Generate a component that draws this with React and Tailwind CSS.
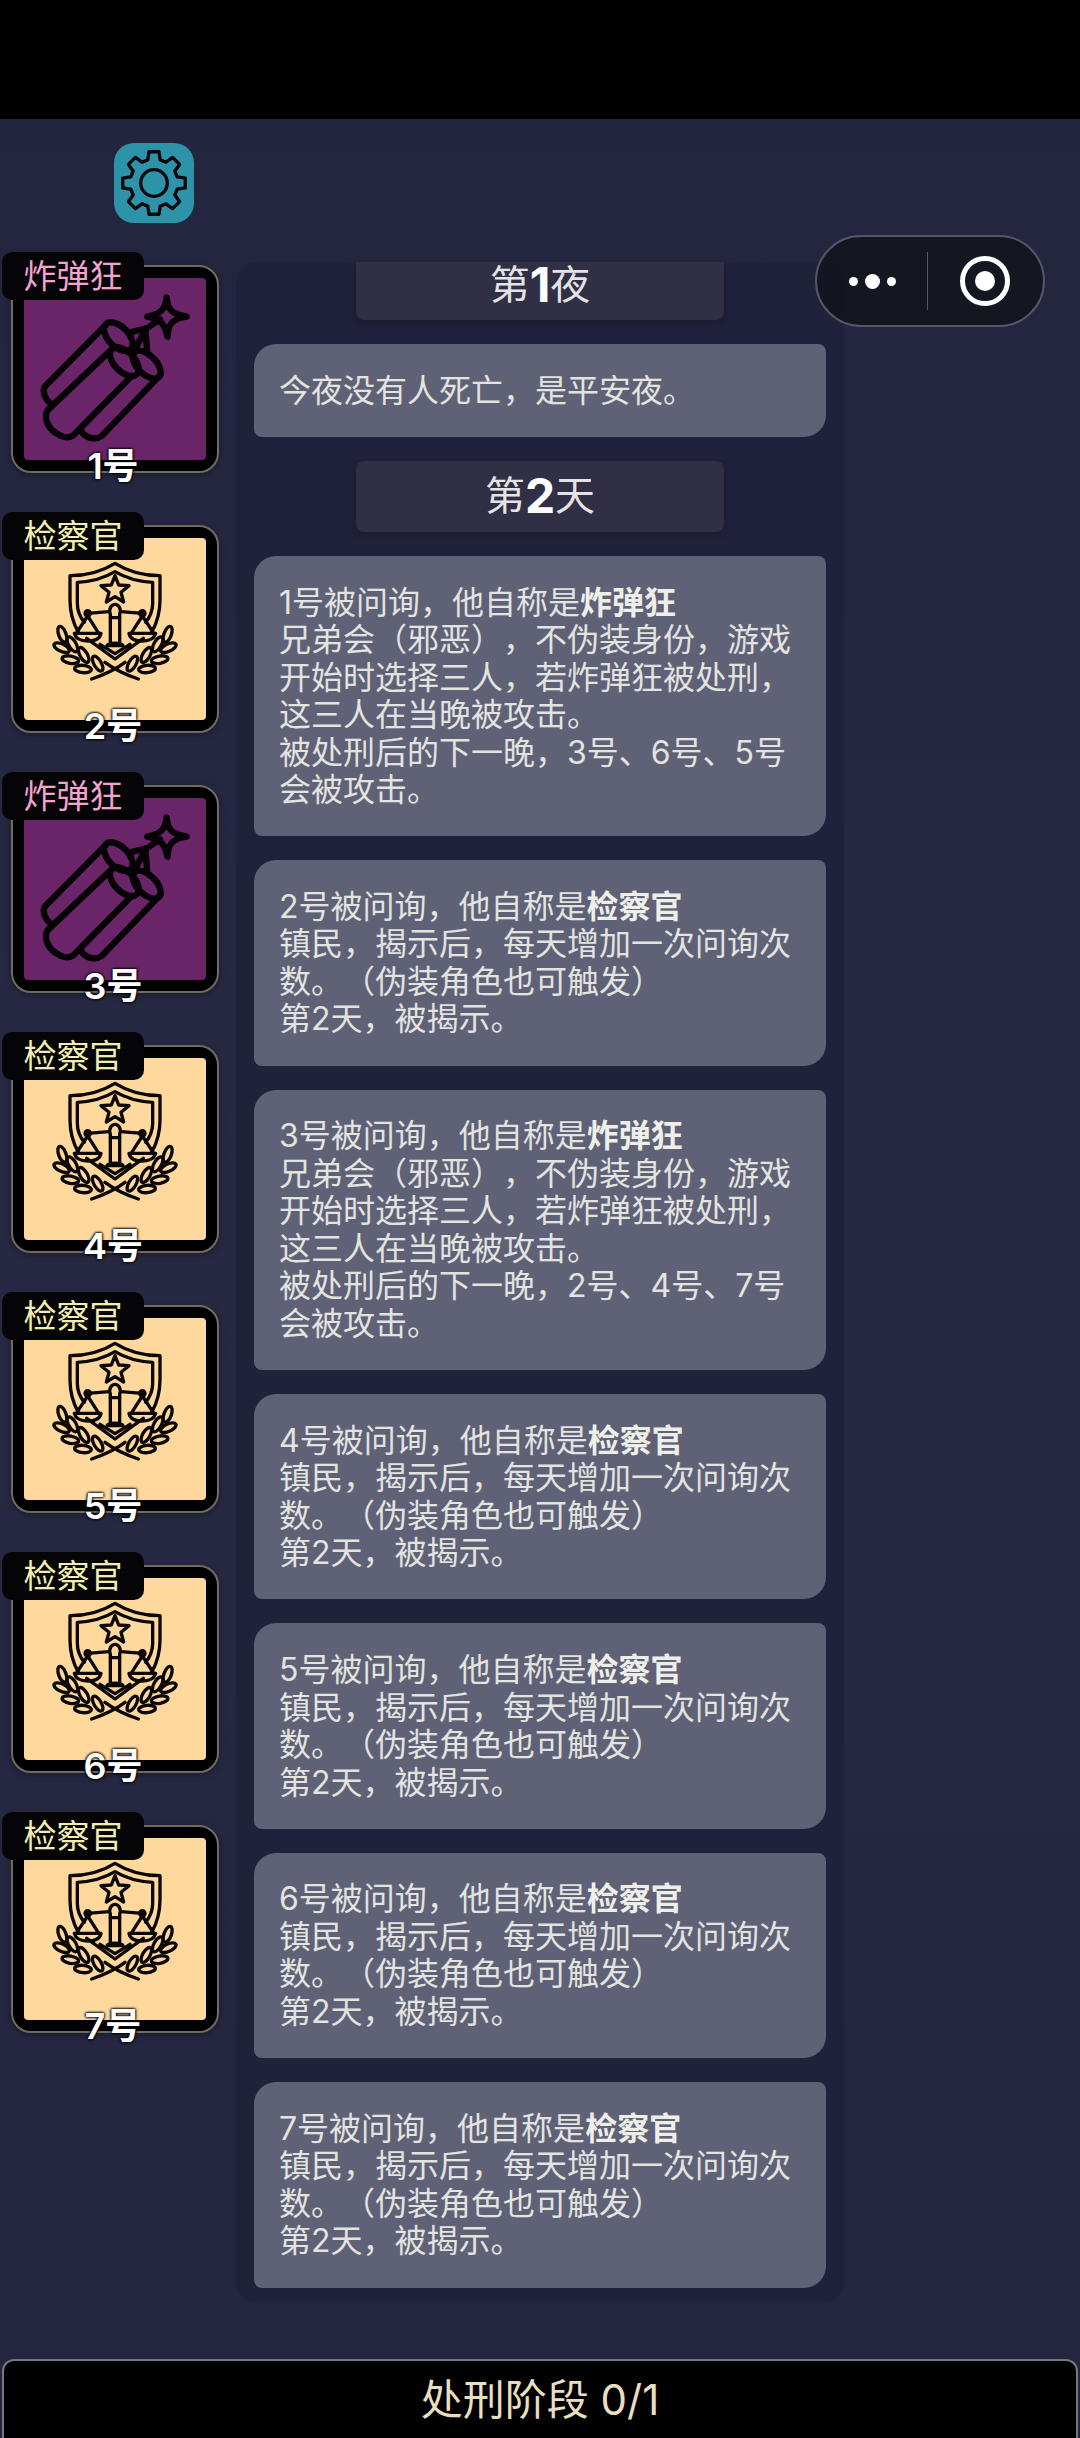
const gearPath = () => {
  const cx = 120
  const cy = 120
  const pts = []
  for (let i = 0; i < 8; i++) {
    const a = (i * 45 - 90) * Math.PI / 180
    const at = (r, d) => {
      const t = a + d * Math.PI / 180
      return `${(cx + r * Math.cos(t)).toFixed(1)} ${(cy + r * Math.sin(t)).toFixed(1)}`
    }
    pts.push(at(72, -15), at(95, -9), at(95, 9), at(72, 15))
  }
  return `M${pts.join('L')}Z`
}

const GearIcon = () => (
  <svg viewBox="0 0 240 240" className="w-full h-full" fill="none" stroke="#05080c" strokeWidth="10" strokeLinejoin="round">
    <path d={gearPath()} />
    <circle cx="120" cy="120" r="40" />
  </svg>
)

const BombIcon = () => (
  <svg viewBox="0 0 546 546" className="w-full h-full" fill="none" stroke="#060206" strokeWidth="19" strokeLinecap="round" strokeLinejoin="round">
    <g transform="translate(18 36)">
      <ellipse cx="265" cy="140" rx="53" ry="30" transform="rotate(45 265 140)" />
      <ellipse cx="283" cy="215" rx="53" ry="30" transform="rotate(45 283 215)" />
      <ellipse cx="350" cy="224" rx="52" ry="28" transform="rotate(45 350 224)" />
      <path d="M228 104L46 288C36 300 42 325 62 340" />
      <path d="M245 178L55 358C40 378 50 410 76 428C98 444 118 445 130 436L305 258" />
      <path d="M152 420C165 445 195 452 215 438L392 254" />
      <path d="M298 128L352 114L390 88M318 172L346 118L352 188" />
      <path d="M410 22C412 58 425 72 470 80C428 86 415 100 412 140C405 100 392 88 352 80C392 72 406 58 410 22Z" />
    </g>
  </svg>
)

const Leaf = ({ x, y, r }) => (
  <ellipse cx={x} cy={y} rx="25" ry="11" transform={`rotate(${r} ${x} ${y})`} />
)

const laurel = [
  { x: 52, y: 238, r: 70 }, { x: 50, y: 278, r: 25 }, { x: 82, y: 268, r: 60 },
  { x: 76, y: 314, r: 10 }, { x: 116, y: 300, r: 60 }, { x: 114, y: 342, r: 5 }, { x: 158, y: 326, r: 60 },
]

const ScaleIcon = () => (
  <svg viewBox="0 0 546 546" className="w-full h-full" fill="none" stroke="#0b0705" strokeWidth="10" strokeLinecap="round" strokeLinejoin="round">
    <g transform="translate(63 51)">
      <path d="M100 232C82 200 75 170 75 135V62C120 62 170 50 210 25C250 50 300 62 345 62V135C345 170 338 200 320 232" />
      <path d="M118 202C104 185 97 165 97 145V82C140 80 180 68 210 50C240 68 280 80 323 82V145C323 165 316 185 302 202" />
      <path d="M210 62L221 90L252 92L228 112L236 141L210 125L184 141L192 112L168 92L199 90Z" />
      <path d="M128 175L192 170M228 170L292 175" />
      <circle cx="128" cy="175" r="8" />
      <circle cx="292" cy="175" r="8" />
      <path d="M128 183L95 233M128 183L160 233M292 183L260 233M292 183L325 233" />
      <path d="M88 235H168C165 250 150 258 128 258C106 258 92 250 88 235Z" />
      <path d="M252 235H332C328 250 314 258 292 258C270 258 255 250 252 235Z" />
      <path d="M196 262V178C190 160 200 148 210 148C220 148 230 160 224 178V262" />
      <path d="M196 188H224M186 272C190 262 230 262 234 272Z" />
      <path d="M125 250L210 312L295 250M165 268L210 296L255 268" />
      <path d="M140 372C180 358 210 345 240 322M280 372C240 358 210 345 180 322" />
      {laurel.map((l, i) => <Leaf key={i} {...l} />)}
      {laurel.map((l, i) => <Leaf key={i} x={420 - l.x} y={l.y} r={-l.r} />)}
    </g>
  </svg>
)

const bomber = { name: '炸弹狂', label: 'text-[#f2a3cf]', bg: 'bg-[#6a2468]', icon: <BombIcon /> }
const prosecutor = { name: '检察官', label: 'text-[#f2eeb2]', bg: 'bg-[#fed89c]', icon: <ScaleIcon /> }

const players = [bomber, prosecutor, bomber, prosecutor, prosecutor, prosecutor, prosecutor]

const bomberDesc = '兄弟会（邪恶），不伪装身份，游戏开始时选择三人，若炸弹狂被处刑，这三人在当晚被攻击。'
const prosecutorLines = ['镇民，揭示后，每天增加一次问询次数。（伪装角色也可触发）', '第2天，被揭示。']

const entries = [
  { no: 1, role: '炸弹狂', lines: [bomberDesc, '被处刑后的下一晚，3号、6号、5号会被攻击。'] },
  { no: 2, role: '检察官', lines: prosecutorLines },
  { no: 3, role: '炸弹狂', lines: [bomberDesc, '被处刑后的下一晚，2号、4号、7号会被攻击。'] },
  { no: 4, role: '检察官', lines: prosecutorLines },
  { no: 5, role: '检察官', lines: prosecutorLines },
  { no: 6, role: '检察官', lines: prosecutorLines },
  { no: 7, role: '检察官', lines: prosecutorLines },
]

const PlayerCard = ({ player, no }) => (
  <div className="relative h-[260px] shrink-0">
    <div className="absolute left-0 top-0 z-10 w-[142px] h-[48px] rounded-[10px] bg-[#050507] flex items-center justify-center">
      <span className={`text-[33px] leading-none ${player.label}`}>{player.name}</span>
    </div>
    <div className="relative ml-[9px] pt-[13px]">
      <div className="w-[208px] h-[208px] rounded-[20px] bg-black border-2 border-[#6f6b5e] p-[11px] shadow-[0_2px_6px_rgba(0,0,0,0.3)]">
        <div className={`w-full h-full rounded-[4px] overflow-hidden ${player.bg}`}>{player.icon}</div>
      </div>
      <div className="absolute left-0 w-[204px] top-[194px] text-center text-[36px] leading-[40px] font-semibold text-white [text-shadow:0_0_3px_#000,0_0_3px_#000,0_0_2px_#000]">
        {no}号
      </div>
    </div>
  </div>
)

const DayHeader = ({ pre, num, post, className }) => (
  <div className={`w-[368px] shrink-0 mx-auto bg-[#302f45] shadow-[0_3px_6px_rgba(0,0,0,0.2)] flex justify-center text-[40px] leading-[40px] text-[#e4e4e4] ${className}`}>
    {pre}<span className="text-[48px] leading-[40px] font-bold text-white">{num}</span>{post}
  </div>
)

const Message = ({ children }) => (
  <div className="rounded-tl-[22px] rounded-br-[22px] rounded-tr-[8px] rounded-bl-[8px] bg-[#5f6176] px-[25px] py-[27.7px] text-[32px] leading-[37.5px] text-[#e3e3e0] [text-spacing-trim:space-all]">
    {children}
  </div>
)

const App = () => {
  return (
    <div className="w-[1080px] h-[2438px] overflow-hidden flex flex-col relative bg-gradient-to-b from-[#23253f] via-[#272842] to-[#242540] font-['Inter','Noto_Sans_CJK_SC',sans-serif]">
      <div className="h-[119px] shrink-0 bg-black" />

      <div className="h-[133px] shrink-0 pt-[24px] pl-[114px]">
        <div className="w-[80px] h-[80px] rounded-[20px] bg-[#2c93a9]">
          <GearIcon />
        </div>
      </div>

      <div className="absolute left-[815px] top-[235px] z-20 w-[230px] h-[92px] rounded-full bg-[#14151f]/95 border-2 border-[#55566a] flex items-center">
        <div className="w-[110px] flex items-center justify-center gap-[7px]">
          <div className="w-[9px] h-[9px] rounded-full bg-white" />
          <div className="w-[15px] h-[15px] rounded-full bg-white" />
          <div className="w-[9px] h-[9px] rounded-full bg-white" />
        </div>
        <div className="w-[1px] h-[58px] bg-[#55566a]" />
        <div className="flex-1 flex items-center justify-center pr-[2px]">
          <div className="w-[50px] h-[50px] rounded-full border-[5px] border-white flex items-center justify-center">
            <div className="w-[20px] h-[20px] rounded-full bg-white" />
          </div>
        </div>
      </div>

      <div className="flex-1 flex min-h-0">
        <div className="w-[236px] shrink-0 pl-[2px]">
          {players.map((p, i) => <PlayerCard key={i} player={p} no={i + 1} />)}
        </div>
        <div className="w-[608px] h-[2040px] mt-[10px] rounded-[20px] bg-[#20213a] px-[18px]">
          <div className="flex flex-col gap-[24px]">
            <DayHeader pre="第" num="1" post="夜" className="h-[58px] items-end pb-[15px] rounded-b-[8px]" />
            <Message>今夜没有人死亡，是平安夜。</Message>
            <DayHeader pre="第" num="2" post="天" className="h-[71px] items-center rounded-[8px]" />
            {entries.map(e => (
              <Message key={e.no}>
                <div>{e.no}号被问询，他自称是<b className="font-bold text-[#efefea]">{e.role}</b></div>
                {e.lines.map((line, i) => <div key={i}>{line}</div>)}
              </Message>
            ))}
          </div>
        </div>
      </div>

      <div className="h-[79px] shrink-0 mx-[2px] rounded-t-[12px] bg-black border-t-2 border-x-2 border-[#77777c] flex items-center justify-center text-[42px] text-[#e8dfc0]">
        处刑阶段 0/1
      </div>
    </div>
  )
}

export default App
